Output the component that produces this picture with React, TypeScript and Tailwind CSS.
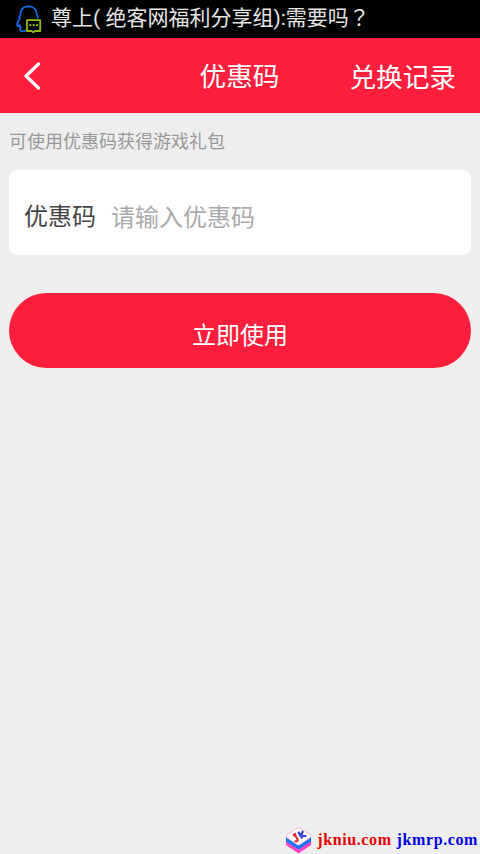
function MessageIcon() {
  return (
    <svg className="h-7 w-[26px] shrink-0" viewBox="0 0 26 28" fill="none">
      <path
        d="M10 25.500c-2 1.300-5.500 1-6-.8-.2-1 .7-1.600.8-2.200L3.500 20C2.500 21.500 1.500 21.500 1.200 20c-.2-2 1-4.200 2.600-6.200-.7-1.300-.4-2.700.4-3.300C4.200 5 7 1.300 12.500 1.300S20.800 5 20.900 10c1 1 1 2.500.6 3.500"
        stroke="#0b70f0"
        strokeWidth="1.700"
        strokeLinejoin="round"
      />
      <path d="M11 15.200h13.200v10.800h-5l-1.900 1.200-1.800-1.200H11z" fill="#000" stroke="#93bd0c" strokeWidth="1.800" strokeLinejoin="round" />
      <path d="M13.300 20.200h2M16.700 20.200h2M20.100 20.200h2" stroke="#a6d20b" strokeWidth="1.800" />
    </svg>
  );
}

function BrandLogo() {
  return (
    <svg className="h-[27px] w-[27px] shrink-0" viewBox="0 0 27 27" fill="none">
      <path d="M1 13l12.500 8L26 13v5L15 25.500q-1.500 1-3 0L1 18z" fill="#ff45c4" />
      <path d="M1 9.500l12.500 8L26 9.500v5L15 21.500q-1.500 1-3 0L1 14.500z" fill="#1676f0" />
      <path d="M2 7.500l10-6.300q1.500-.9 3 0L25 7.500q2 1.500 0 3.200L15 17.500q-1.500 1-3 0L2 10.700Q0 9 2 7.500z" fill="#fff" stroke="#ffa6e0" strokeWidth=".8" />
      <path d="M8 8.500l3-2M9.600 7.600l3 4.600q.6 1.500-.7 2t-2-.7" stroke="#ef3038" strokeWidth="2.200" />
      <path d="M13.200 4.800l4.300 6.700M18 4l-2.200 4.800 5.600.2" stroke="#3339dc" strokeWidth="2.200" />
    </svg>
  );
}

export default function App() {
  return (
    <div className="flex h-[854px] w-[480px] flex-col overflow-hidden bg-[#eeeeee] font-['Roboto','Noto_Sans_CJK_SC',sans-serif]">
      {/* Notification bar */}
      <div className="flex h-[38px] shrink-0 items-center bg-black pl-4 text-[21px] leading-none text-[#e6e6e6]">
        <MessageIcon />
        <span className="ml-[9px] whitespace-nowrap pb-[3px]">
          尊上( 绝客网福利分享组):需要吗<span lang="zh-TW" className="font-['Noto_Sans_CJK_TC',sans-serif]">？</span>
        </span>
      </div>

      {/* Header */}
      <header className="grid h-[75px] shrink-0 grid-cols-3 items-center bg-[#ff1f3d] text-[26.67px] leading-none text-white">
        <button aria-label="返回" className="flex pl-[23px]">
          <svg className="h-8 w-[18px]" viewBox="0 0 18 32" fill="none">
            <path d="M15.500 4L3 16l12.500 12" stroke="currentColor" strokeWidth="3.300" strokeLinecap="round" strokeLinejoin="round" />
          </svg>
        </button>
        <h1 className="pr-px pt-1 text-center">优惠码</h1>
        <button className="whitespace-nowrap pr-6 pt-[5px] text-right">兑换记录</button>
      </header>

      <main className="flex-1 px-[9px]">
        <p className="pt-[19px] text-[18px] leading-5 text-[#999999]">可使用优惠码获得游戏礼包</p>

        <div className="mt-[18px] flex h-[85px] items-center rounded-lg bg-white pl-[15px] text-2xl leading-none">
          <label htmlFor="code" className="w-[87px] pt-[9px] text-[#444444]">优惠码</label>
          <input
            id="code"
            className="h-10 min-w-0 flex-1 pt-2.5 outline-none placeholder:text-[#aaaaaa]"
            placeholder="请输入优惠码"
          />
        </div>

        <button className="mt-[38px] h-[75px] w-full rounded-full bg-[#ff1f3d] pt-2.5 text-2xl leading-none text-white">
          立即使用
        </button>
      </main>

      <footer className="flex h-7 shrink-0 items-center justify-end pr-0.5 font-['Liberation_Serif',serif] text-base font-bold leading-none tracking-[0.6px]">
        <BrandLogo />
        <span className="ml-[5px] text-[#e60000]">jkniu.com</span>
        <span className="ml-[5px] text-[#0000e6]">jkmrp.com</span>
      </footer>
    </div>
  );
}
